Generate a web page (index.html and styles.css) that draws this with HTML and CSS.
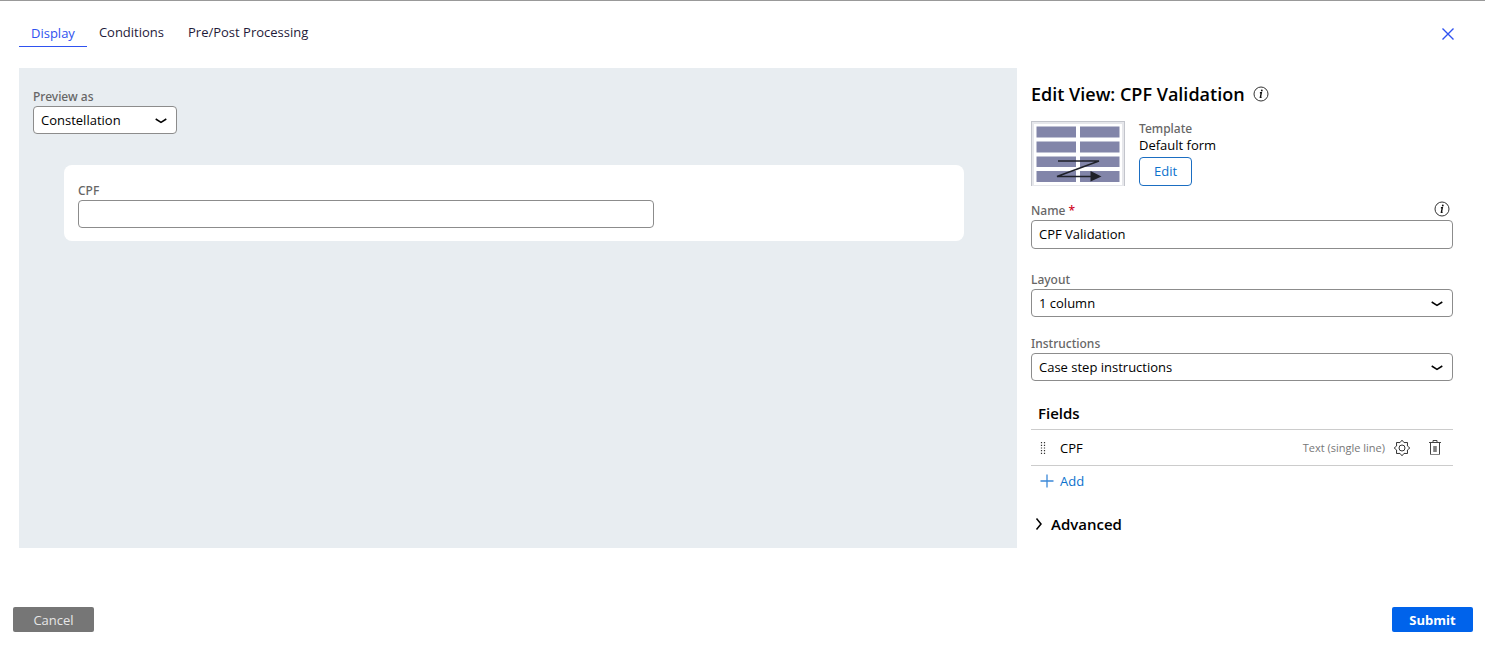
FILE: index.html
```
<!DOCTYPE html>
<html lang="en">
<head>
    <meta charset="UTF-8">
    <meta name="viewport" content="width=device-width, initial-scale=1.0">
    <title>Edit View: CPF Validation</title>
    <link rel="stylesheet" href="styles.css">
</head>
<body>
    <form class="dialog">
        <header class="dialog-header">
            <nav class="tabs">
                <a href="#display" class="tab active">Display</a>
                <a href="#conditions" class="tab">Conditions</a>
                <a href="#processing" class="tab">Pre/Post Processing</a>
            </nav>
            <button type="button" class="icon-button close" aria-label="Close">
                <svg width="14" height="14" viewBox="0 0 14 14"><path d="M1.5 1.5l11 11M12.5 1.5l-11 11" fill="none" stroke="#2f52f0" stroke-width="1.4"/></svg>
            </button>
        </header>

        <main class="workspace">
            <section class="preview">
                <div class="field preview-as">
                    <label for="previewAs">Preview as</label>
                    <div class="select">
                        <select id="previewAs">
                            <option>Constellation</option>
                        </select>
                        <svg width="12" height="6" viewBox="0 0 12 6"><path d="M.7 1L6 4.3 11.3 1" fill="none" stroke="#000" stroke-width="1.5"/></svg>
                    </div>
                </div>
                <div class="card field">
                    <label for="cpf">CPF</label>
                    <input type="text" id="cpf">
                </div>
            </section>

            <aside class="settings">
                <h1>
                    Edit View: CPF Validation
                    <button type="button" class="icon-button" aria-label="About this view">
                        <svg width="16" height="16" viewBox="0 0 16 16"><circle cx="8" cy="8" r="7" fill="none" stroke="#333" stroke-width="1"/><path d="M6.9 6.8H8.3L7.4 11.4H8.6" fill="none" stroke="#111" stroke-width="1.4"/><circle cx="8.8" cy="4.5" r=".9" fill="#111"/></svg>
                    </button>
                </h1>

                <div class="template">
                    <svg class="thumb" width="94" height="65" viewBox="0 0 94 65">
                        <path d="M0 0H94V65H0z" fill="#c3c5cc"/>
                        <path d="M1 1H93V65H1z" fill="#e6e7eb"/>
                        <path d="M3 3H91V64H3z" fill="#fff"/>
                        <path d="M5.5 5.5h39.5v11h-39.500zM49 5.5h39.5v11h-39.500zM5.5 20.5h39.5v11h-39.500zM49 20.5h39.5v11h-39.500zM5.5 35.5h39.5v10.5h-39.500zM49 35.5h39.5v10.5h-39.500zM5.5 50h39.5v11h-39.500zM49 50h39.5v11h-39.500z" fill="#8285a9"/>
                        <path d="M27 40H68L26 55.500H62" fill="none" stroke="#1f2129" stroke-width="1.4"/>
                        <path d="M59.5 50L70.5 55.5L59.5 60.500z" fill="#1f2129"/>
                    </svg>
                    <div class="template-info">
                        <span class="caption">Template</span>
                        <span>Default form</span>
                        <button type="button" class="edit-button">Edit</button>
                    </div>
                </div>

                <div class="field">
                    <div class="label-row">
                        <label for="viewName">Name <span class="required">*</span></label>
                        <button type="button" class="icon-button" aria-label="About the name">
                            <svg width="16" height="16" viewBox="0 0 16 16"><circle cx="8" cy="8" r="7" fill="none" stroke="#333" stroke-width="1"/><path d="M6.9 6.8H8.3L7.4 11.4H8.6" fill="none" stroke="#111" stroke-width="1.4"/><circle cx="8.8" cy="4.5" r=".9" fill="#111"/></svg>
                        </button>
                    </div>
                    <input type="text" id="viewName" value="CPF Validation" required>
                </div>
                <div class="field layout-field">
                    <label for="layout">Layout</label>
                    <div class="select">
                        <select id="layout">
                            <option>1 column</option>
                        </select>
                        <svg width="12" height="6" viewBox="0 0 12 6"><path d="M.7 1L6 4.3 11.3 1" fill="none" stroke="#000" stroke-width="1.5"/></svg>
                    </div>
                </div>
                <div class="field">
                    <label for="instructions">Instructions</label>
                    <div class="select">
                        <select id="instructions">
                            <option>Case step instructions</option>
                        </select>
                        <svg width="12" height="6" viewBox="0 0 12 6"><path d="M.7 1L6 4.3 11.3 1" fill="none" stroke="#000" stroke-width="1.5"/></svg>
                    </div>
                </div>

                <h2>Fields</h2>
                <ul class="field-list">
                    <li>
                        <svg width="6" height="14" viewBox="0 0 6 14"><path d="M1.5 1v12M4.5 1v12" fill="none" stroke="#333" stroke-width="1.2" stroke-dasharray="1.2 1.5"/></svg>
                        <span class="field-name">CPF</span>
                        <span class="field-type">Text (single line)</span>
                        <button type="button" class="icon-button" aria-label="Configure CPF">
                            <svg width="18" height="18" viewBox="0 0 18 18" fill="none" stroke="#333" stroke-width="1"><circle cx="9" cy="9" r="3"/><path d="M9 1.200L11 3.600L14.500 3.500L14.400 7L16.800 9L14.400 11L14.500 14.500L11 14.400L9 16.800L7 14.400L3.500 14.500L3.600 11L1.200 9L3.600 7L3.500 3.500L7 3.600z" stroke-linejoin="round"/></svg>
                        </button>
                        <button type="button" class="icon-button" aria-label="Delete CPF">
                            <svg width="14" height="16" viewBox="0 0 14 16" fill="none" stroke="#444" stroke-width="1"><path d="M1 2.5H13M5 2.5V.5H9V2.5M2.5 2.5V14.5M11.5 2.5V14.500"/><path d="M2 14.500H12" stroke="#888"/><path d="M5 6H9V12H5z" fill="#999" stroke="none"/><path d="M7 6V12" stroke="#666"/></svg>
                        </button>
                    </li>
                </ul>
                <button type="button" class="add-button">
                    <svg width="14" height="14" viewBox="0 0 14 14"><path d="M7 .5V13.5M.5 7H13.5" stroke="#3b88d8" stroke-width="1.3"/></svg>
                    Add
                </button>
                <button type="button" class="advanced">
                    <svg width="8" height="14" viewBox="0 0 8 14"><path d="M1.5 1.5L6 7L1.5 12.5" fill="none" stroke="#000" stroke-width="1.5"/></svg>
                    Advanced
                </button>
            </aside>
        </main>

        <footer class="dialog-footer">
            <button type="button" class="cancel">Cancel</button>
            <button type="submit" class="submit">Submit</button>
        </footer>
    </form>
</body>
</html>
```
FILE: styles.css
```
* {
    box-sizing: border-box;
}
body {
    margin: 0;
    background-color: #ffffff;
    color: #000000;
    font-family: "Open Sans", sans-serif;
    font-size: 13px;
    line-height: 16px;
}
button, input, select {
    font: inherit;
    color: inherit;
}
button {
    cursor: pointer;
}
svg {
    display: block;
    flex: none;
}
.dialog {
    border-top: 1px solid #999999;
}
.dialog-header {
    display: flex;
    justify-content: space-between;
    align-items: flex-start;
    padding: 20px 30px 0 19px;
}
.tabs {
    display: flex;
    align-items: flex-start;
}
.tab {
    padding: 2px 12px 6px;
    color: #1f1b3a;
    line-height: 18px;
    text-decoration: none;
}
.tab.active {
    padding: 3px 12px 4px;
    border-bottom: 1px solid #2f52f0;
    color: #2f52f0;
}
.icon-button {
    padding: 0;
    border: none;
    background: none;
}
.close {
    margin-top: 6px;
}
.workspace {
    display: grid;
    grid-template-columns: minmax(0, 1fr) 422px;
    gap: 14px;
    padding: 21px 32px 0 19px;
}
.preview {
    padding: 20px 53px 0 45px;
    background-color: #e8edf1;
}
.field {
    display: flex;
    flex-direction: column;
}
.field label, .caption {
    color: #666666;
    font-family: "Noto Sans", sans-serif;
    font-size: 12px;
    font-weight: 500;
    line-height: 18px;
}
.preview-as {
    width: 144px;
    margin-left: -31px;
}
.field input, .select select {
    width: 100%;
    height: 28px;
    padding: 0 7px 1px;
    border: 1px solid #8c8c8c;
    border-radius: 4px;
    background-color: #ffffff;
}
.select {
    display: grid;
    align-items: center;
}
.select select, .select svg {
    grid-area: 1 / 1;
}
.select select {
    appearance: none;
}
.select svg {
    justify-self: end;
    margin: 2px 10px 0 0;
    pointer-events: none;
}
.card {
    margin-top: 31px;
    padding: 17px 14px 13px;
    border-radius: 8px;
    background-color: #ffffff;
}
.card input {
    width: 66%;
}
.settings {
    padding: 14px 0;
}
h1 {
    display: flex;
    align-items: center;
    gap: 8px;
    margin: 0 0 15px;
    font-size: 18px;
    font-weight: 600;
    line-height: 24px;
}
.template {
    display: flex;
    gap: 14px;
    margin-bottom: 16px;
}
.template-info {
    display: flex;
    flex-direction: column;
    align-items: flex-start;
}
.caption {
    line-height: 16px;
}
.edit-button {
    height: 29px;
    margin-top: 4px;
    padding: 0 14px 1px;
    border: 1px solid #1b6ec2;
    border-radius: 4px;
    background-color: #ffffff;
    color: #0c72cd;
}
.label-row {
    display: flex;
    justify-content: space-between;
    padding-right: 3px;
}
.label-row .icon-button {
    margin: -4px 0 0;
}
.required {
    color: #d0021b;
}
.settings .field input {
    height: 29px;
}
.layout-field {
    margin: 22px 0 18px;
}
h2 {
    margin: 22px 0 6px 7px;
    font-size: 15px;
    font-weight: 600;
    line-height: 20px;
}
.field-list {
    margin: 0;
    padding: 0;
    border-top: 1px solid #cccccc;
    list-style: none;
}
.field-list li {
    display: flex;
    align-items: center;
    height: 36px;
    padding: 0 11px 0 9px;
    border-bottom: 1px solid #cccccc;
}
.field-name {
    flex: 1;
    margin-left: 14px;
}
.field-type {
    margin-right: 8px;
    color: #777777;
    font-size: 11px;
}
.field-list .icon-button + .icon-button {
    margin-left: 17px;
}
.add-button, .advanced {
    display: flex;
    align-items: center;
    border: none;
    background: none;
}
.add-button {
    gap: 6px;
    margin-top: 6px;
    padding: 0 9px;
    color: #0c72cd;
    line-height: 18px;
}
.advanced {
    gap: 8px;
    margin-top: 24px;
    padding: 0 4px;
    font-size: 15px;
    font-weight: 600;
    line-height: 20px;
}
.dialog-footer {
    display: flex;
    justify-content: space-between;
    padding: 59px 12px 12px 13px;
}
.dialog-footer button {
    width: 81px;
    height: 25px;
    padding: 0;
    border: none;
    border-radius: 2px;
    background-color: #767676;
    color: #e6e6e6;
}
.dialog-footer .submit {
    background-color: #0063eb;
    color: #ffffff;
    font-weight: 700;
}
```
